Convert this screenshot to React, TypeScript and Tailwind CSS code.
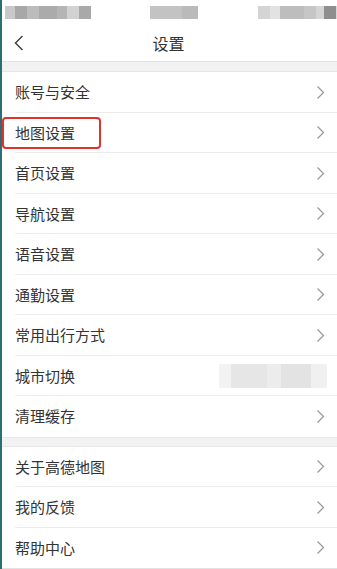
import React from "react";

const Chevron = () => (
  <svg width="9" height="15" viewBox="0 0 9 15" fill="none">
    <path d="M1.5 1.5 L7.5 7.5 L1.5 13.5" stroke="#9a9a9a" strokeWidth="1.3" />
  </svg>
);

type Row = { label: string; highlight?: boolean; blur?: boolean };

const group1: Row[] = [
  { label: "账号与安全" },
  { label: "地图设置", highlight: true },
  { label: "首页设置" },
  { label: "导航设置" },
  { label: "语音设置" },
  { label: "通勤设置" },
  { label: "常用出行方式" },
  { label: "城市切换", blur: true },
  { label: "清理缓存" },
];
const group2: Row[] = [{ label: "关于高德地图" }, { label: "我的反馈" }, { label: "帮助中心" }];

function RowItem({ r, last }: { r: Row; last: boolean }) {
  return (
    <div className="relative h-[40.5px] flex items-center pl-[15px]">
      {r.highlight && (
        <div className="absolute left-[2px] top-[4px] w-[99px] h-[32px] border-2 border-[#e2322b] rounded-[4px]" />
      )}
      <span className="text-[15px] text-[#333] flex-1">{r.label}</span>
      {r.blur ? (
        <div className="mr-[10px] w-[108px] h-[24px] flex">
          <div className="w-[12px] bg-[#f2f2f2]" />
          <div className="w-[36px] bg-[#e6e6e6]" />
          <div className="w-[14px] bg-[#ececec]" />
          <div className="w-[30px] bg-[#e3e3e3]" />
          <div className="w-[16px] bg-[#f0f0f0]" />
        </div>
      ) : (
        <div className="mr-[12px] flex items-center">
          <Chevron />
        </div>
      )}
      {!last && <div className="absolute left-[15px] right-0 bottom-0 h-px bg-[#ececec]" />}
    </div>
  );
}

export default function App() {
  return (
    <div
      className="relative w-[337px] h-[569px] bg-white overflow-hidden"
      style={{ fontFamily: '"Noto Sans CJK SC", "Noto Sans", sans-serif' }}
    >
      <div className="absolute left-0 top-0 bottom-0 w-[2px] bg-[#2b6f74] z-10" />
      {/* status bar */}
      <div className="h-[25px] flex items-center">
        <div className="flex h-[13px] ml-[5px]">
          <div className="w-[10px] bg-[#c8c8c8]" />
          <div className="w-[12px] bg-[#a8a8a8]" />
          <div className="w-[12px] bg-[#bcbcbc]" />
          <div className="w-[18px] bg-[#ababab]" />
          <div className="w-[10px] bg-[#b5b5b5]" />
          <div className="w-[12px] bg-[#d2d2d2]" />
          <div className="w-[12px] bg-[#a9a9a9]" />
        </div>
        <div className="flex h-[13px] ml-[59px]">
          <div className="w-[32px] bg-[#c3c3c3]" />
          <div className="w-[16px] bg-[#bababa]" />
        </div>
        <div className="flex h-[13px] ml-[60px]">
          <div className="w-[12px] bg-[#d4d4d4]" />
          <div className="w-[10px] bg-[#e2e2e2]" />
          <div className="w-[24px] bg-[#bdbdbd]" />
          <div className="w-[12px] bg-[#c6c6c6]" />
          <div className="w-[8px] bg-[#d5d5d5]" />
          <div className="w-[12px] bg-[#8e8e8e]" />
          <div className="w-[8px] bg-[#d8d8d8]" />
        </div>
      </div>
      {/* header */}
      <div className="relative h-[37px] flex items-center justify-center border-b border-[#e2e2e2]">
        <svg className="absolute left-[14px] top-[10px]" width="10" height="16" viewBox="0 0 10 16" fill="none">
          <path d="M8.5 1 L1.5 8 L8.5 15" stroke="#444" strokeWidth="1.5" />
        </svg>
        <span className="text-[16px] text-[#333]">设置</span>
      </div>
      <div className="h-[10px] bg-[#f2f2f2] border-b border-[#e8e8e8]" />
      <div>
        {group1.map((r, i) => (
          <RowItem key={r.label} r={r} last={i === group1.length - 1} />
        ))}
      </div>
      <div className="h-[10px] bg-[#f2f2f2] border-y border-[#e8e8e8]" />
      <div className="border-b border-[#e2e2e2]">
        {group2.map((r, i) => (
          <RowItem key={r.label} r={r} last={i === group2.length - 1} />
        ))}
      </div>
    </div>
  );
}
